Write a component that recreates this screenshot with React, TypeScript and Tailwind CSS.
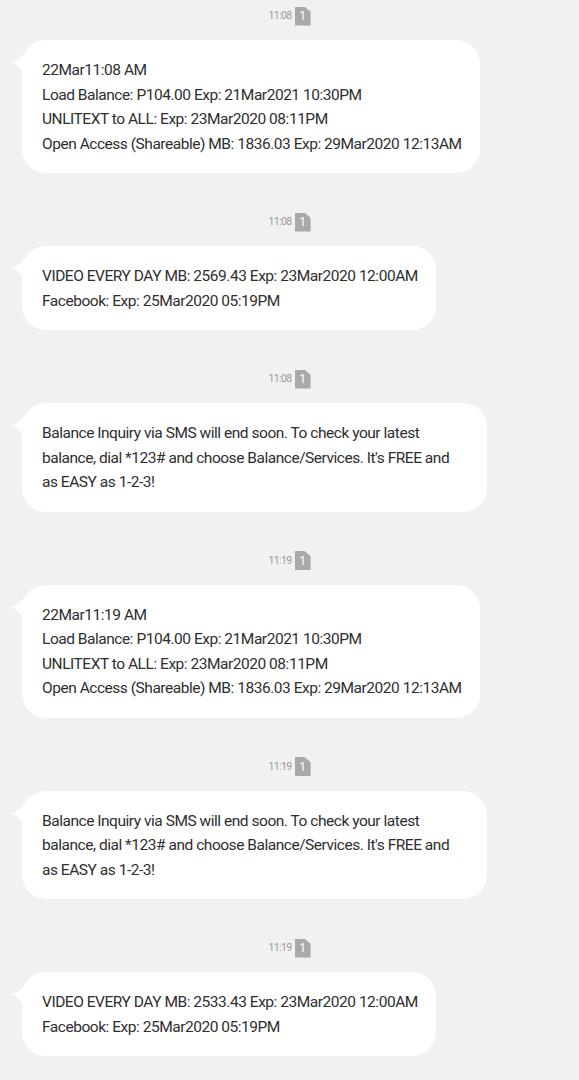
import React from "react";

type Msg = {
  time: string;
  lines: string[];
  wraps?: boolean;
};

const notice =
  "Balance Inquiry via SMS will end soon. To check your latest balance, dial *123# and choose Balance/Services. It's FREE and as EASY as 1-2-3!";

const messages: Msg[] = [
  {
    time: "11:08",
    lines: [
      "22Mar11:08 AM",
      "Load Balance: P104.00 Exp: 21Mar2021 10:30PM",
      "UNLITEXT to ALL: Exp: 23Mar2020 08:11PM",
      "Open Access (Shareable) MB: 1836.03 Exp: 29Mar2020 12:13AM",
    ],
  },
  {
    time: "11:08",
    lines: [
      "VIDEO EVERY DAY MB: 2569.43 Exp: 23Mar2020 12:00AM",
      "Facebook: Exp: 25Mar2020 05:19PM",
    ],
  },
  { time: "11:08", lines: [notice], wraps: true },
  {
    time: "11:19",
    lines: [
      "22Mar11:19 AM",
      "Load Balance: P104.00 Exp: 21Mar2021 10:30PM",
      "UNLITEXT to ALL: Exp: 23Mar2020 08:11PM",
      "Open Access (Shareable) MB: 1836.03 Exp: 29Mar2020 12:13AM",
    ],
  },
  { time: "11:19", lines: [notice], wraps: true },
  {
    time: "11:19",
    lines: [
      "VIDEO EVERY DAY MB: 2533.43 Exp: 23Mar2020 12:00AM",
      "Facebook: Exp: 25Mar2020 05:19PM",
    ],
  },
];

const Stamp = ({ time }: { time: string }) => (
  <div className="flex items-center justify-center gap-[3px] h-[20px]">
    <span className="text-[10.5px] text-[#999999] tracking-[-0.6px]">{time}</span>
    <span className="relative flex h-[19px] w-[16px] items-center justify-center bg-[#a9a9a9] text-[12px] leading-none text-white [clip-path:polygon(0_0,62%_0,100%_28%,100%_100%,0_100%)]">
      1
    </span>
  </div>
);

const Bubble = ({ lines, wraps }: { lines: string[]; wraps?: boolean }) => (
  <div className="relative ml-[22px] w-fit max-w-[465px] rounded-[24px] bg-white pl-[20px] pr-[18px] pt-[18px] pb-[17px]">
    <svg
      className="absolute left-[-11px] top-[12px]"
      width="14"
      height="22"
      viewBox="0 0 14 22"
    >
      <path d="M14 0 C10 6 5 9 0 10 C5 12 10 16 14 22 Z" fill="#ffffff" />
    </svg>
    {lines.map((l, i) => (
      <div
        key={i}
        className={
          wraps
            ? "pr-[6px] text-[15.5px] leading-[24.5px] text-[#2e2e2e] tracking-[-0.47px]"
            : "text-[15.5px] leading-[24.5px] text-[#2e2e2e] tracking-[-0.47px]"
        }
      >
        {l}
      </div>
    ))}
  </div>
);

export default function App() {
  return (
    <div className="min-h-[1080px] w-[579px] bg-[#f1f1f1] pt-[6px] font-['Roboto',sans-serif]">
      {messages.map((m, i) => (
        <div key={i} className="flex flex-col">
          <div className={i === 0 ? "mb-[14px]" : "mt-[39px] mb-[14px]"}>
            <Stamp time={m.time} />
          </div>
          <Bubble lines={m.lines} wraps={m.wraps} />
        </div>
      ))}
    </div>
  );
}
